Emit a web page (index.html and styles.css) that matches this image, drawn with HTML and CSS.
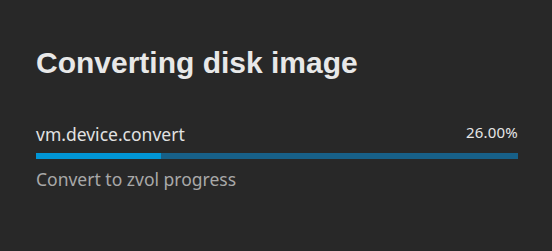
FILE: index.html
```html
<!DOCTYPE html>
<html>
<head>
<meta charset="utf-8">
<link rel="stylesheet" href="styles.css">
</head>
<body>
<div class="dialog">
  <h1 class="title">Converting disk image</h1>
  <div class="job">
    <div class="job-head">
      <span class="job-name">vm.device.convert</span>
      <span class="job-pct">26.00%</span>
    </div>
    <div class="bar"><div class="bar-fill" style="width: 26%"></div></div>
    <div class="job-desc">Convert to zvol progress</div>
  </div>
</div>
</body>
</html>
```
FILE: styles.css
```css
html, body {
  margin: 0;
  background: #282828;
}
.dialog {
  padding: 45px 34px 0 36px;
  font-family: "Noto Sans", "Open Sans", sans-serif;
}
.title {
  margin: 0;
  font-family: "Liberation Sans", Arial, sans-serif;
  font-weight: bold;
  font-size: 30px;
  line-height: 36px;
  color: #e8e8e8;
}
.job {
  margin-top: 41px;
}
.job-head {
  display: flex;
  justify-content: space-between;
  align-items: flex-start;
}
.job-name {
  font-size: 17.5px;
  line-height: 24px;
  color: #e2e2e2;
}
.job-pct {
  font-size: 15px;
  line-height: 20px;
  letter-spacing: 0.2px;
  color: #e6e6e6;
}
.bar {
  margin-top: 7px;
  height: 6px;
  background: #176088;
}
.bar-fill {
  height: 100%;
  background: #0095d5;
}
.job-desc {
  margin-top: 8px;
  font-size: 17.5px;
  line-height: 24px;
  color: #a8a8a8;
}
```
